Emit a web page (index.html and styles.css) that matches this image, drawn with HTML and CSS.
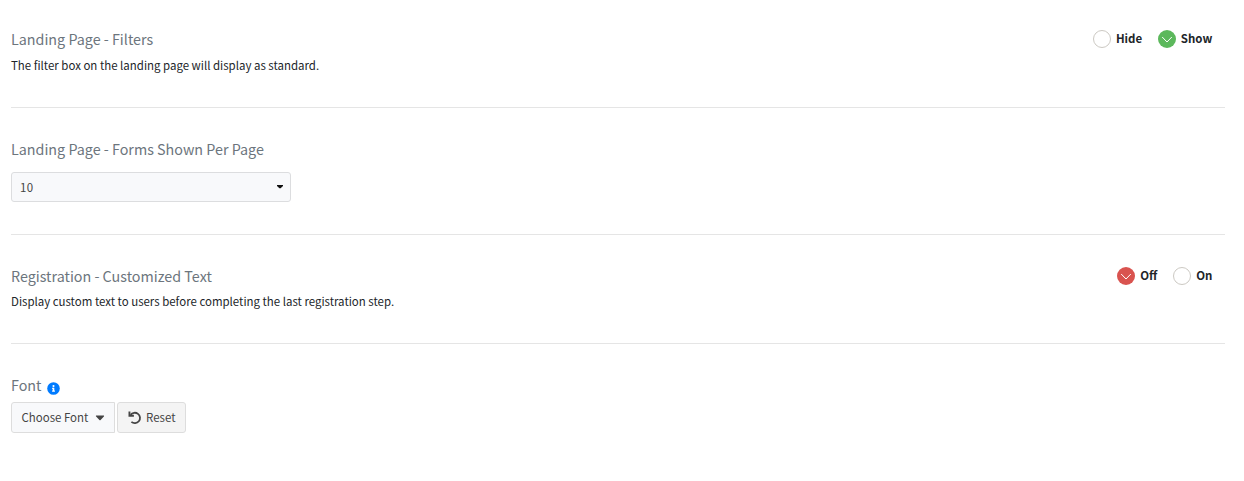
FILE: index.html
```
<!DOCTYPE html>
<html lang="en">
<head>
<meta charset="utf-8">
<title>Settings</title>
<link rel="stylesheet" href="styles.css">
</head>
<body>
<main class="settings">
  <section class="row row-filters">
    <div class="info">
      <h2 class="title">Landing Page - Filters</h2>
      <p class="desc">The filter box on the landing page will display as standard.</p>
    </div>
    <div class="options">
      <label class="option"><span class="radio"></span><span class="option-text">Hide</span></label>
      <label class="option"><span class="radio radio-green"><svg class="check" viewBox="0 0 18 18"><path d="M4.200 7 9 12 13.800 7"/></svg></span><span class="option-text">Show</span></label>
    </div>
  </section>
  <section class="row row-forms">
    <div class="info">
      <h2 class="title">Landing Page - Forms Shown Per Page</h2>
      <div class="select"><span>10</span><svg class="select-caret" viewBox="0 0 6 4"><path d="M0 0h6v1L3.600 3.300H2.400L0 1z"/></svg></div>
    </div>
  </section>
  <section class="row row-registration">
    <div class="info">
      <h2 class="title">Registration - Customized Text</h2>
      <p class="desc">Display custom text to users before completing the last registration step.</p>
    </div>
    <div class="options">
      <label class="option"><span class="radio radio-red"><svg class="check" viewBox="0 0 18 18"><path d="M4.200 7 9 12 13.800 7"/></svg></span><span class="option-text">Off</span></label>
      <label class="option"><span class="radio"></span><span class="option-text">On</span></label>
    </div>
  </section>
  <section class="row row-font">
    <div class="info">
      <h2 class="title"><span>Font</span><svg class="info-icon" viewBox="0 0 512 512"><path fill="#007bff" d="M256 8a248 248 0 1 0 0 496 248 248 0 0 0 0-496z"/><path fill="#fff" d="M256 118a42 42 0 1 1 0 84 42 42 0 0 1 0-84zm56 254c0 6.600-5.400 12-12 12h-88c-6.600 0-12-5.400-12-12v-24c0-6.600 5.400-12 12-12h12v-64h-12c-6.600 0-12-5.400-12-12v-24c0-6.600 5.400-12 12-12h64c6.600 0 12 5.400 12 12v100h12c6.600 0 12 5.400 12 12z"/></svg></h2>
      <div class="buttons">
        <button class="btn btn-choose"><span>Choose Font</span><svg class="btn-caret" viewBox="0 0 10 6"><path d="M1.500.5h7c.6 0 .8.600.4 1L5.600 5a.9.900 0 0 1-1.200 0L1.100 1.500C.7 1.100.9.5 1.500.5z"/></svg></button>
        <button class="btn btn-reset"><svg class="undo" viewBox="0 0 14 14"><path class="undo-arc" d="M2.600 3.900A5.200 5.200 0 1 1 3.400 10.900"/><path class="undo-head" d="M.5.600h1.900v3.200h3.500v2H.5z"/></svg><span>Reset</span></button>
      </div>
    </div>
  </section>
</main>
</body>
</html>
```
FILE: styles.css
```
* { box-sizing: border-box; }
body {
  margin: 0;
  background: #fff;
  color: #212529;
  font-family: "Source Sans Pro", "Noto Sans CJK SC", sans-serif;
  font-size: 11.46px;
}
.settings { padding: 0 19px 0 11px; }
.row {
  display: flex;
  justify-content: space-between;
  align-items: flex-start;
  border-bottom: 1px solid #e5e5e5;
}
.row-filters { height: 108px; padding-top: 28px; }
.row-forms { height: 127px; padding-top: 30px; }
.row-registration { height: 109px; padding-top: 30px; }
.row-font { padding-top: 30px; border-bottom: 0; }
.title {
  display: flex;
  align-items: center;
  margin: 0;
  height: 22px;
  color: #6c757d;
  font-size: 14.32px;
  font-weight: 400;
  line-height: 22px;
}
.desc { margin: 5px 0 0; line-height: 20px; }
.row-registration .desc { margin-top: 4px; }
.options { display: flex; gap: 15.6px; padding: 1px 12.7px 0 0; }
.option { display: flex; align-items: center; gap: 5.2px; height: 20px; font-weight: 700; line-height: 20px; }
.option-text { padding-bottom: 2px; }
.row-registration .options { padding-top: .5px; }
.radio { flex: none; width: 18px; height: 18px; border: 1px solid #ccc9c3; border-radius: 50%; background: #fff; }
.radio-green { border: 0; background: #5cb85c; }
.radio-red { border: 0; background: #d9534f; }
.check { display: block; width: 18px; height: 18px; fill: none; stroke: #fff; stroke-width: 1; }
.select {
  display: flex;
  align-items: center;
  justify-content: space-between;
  width: 280px;
  height: 30px;
  margin-top: 12px;
  padding: 0 7px 0 8px;
  border: 1px solid #dcdddf;
  border-radius: 3px;
  background: #f8f9fb;
  color: #444;
  line-height: 20px;
}
.select span { font-size: 11.46px; letter-spacing: .3px; }
.select-caret { width: 6px; height: 4px; margin-top: -1px; fill: #111; }
.info-icon { width: 13px; height: 13px; margin: 6px 0 0 5px; }
.buttons { display: flex; gap: 2px; margin-top: 6px; }
.btn {
  display: flex;
  align-items: center;
  height: 31px;
  padding: 0 10px 0 9px;
  border: 1px solid #ddd;
  border-radius: 3px;
  color: #444;
  font: inherit;
  line-height: 20px;
}
.btn span { padding-bottom: 2px; }
.btn-choose { width: 104px; padding: 0 9px 0 9.5px; background: #f8f9fb; justify-content: space-between; border-radius: 3px 0 0 3px; }
.btn-reset { width: 69px; padding: 0 9.5px; background: #f4f4f4; justify-content: space-between; }
.btn-caret { width: 10px; height: 6px; fill: #444; }
.undo { width: 14px; height: 14px; fill: none; }
.undo-arc { stroke: #444; stroke-width: 1.800; }
.undo-head { fill: #444; }
```
